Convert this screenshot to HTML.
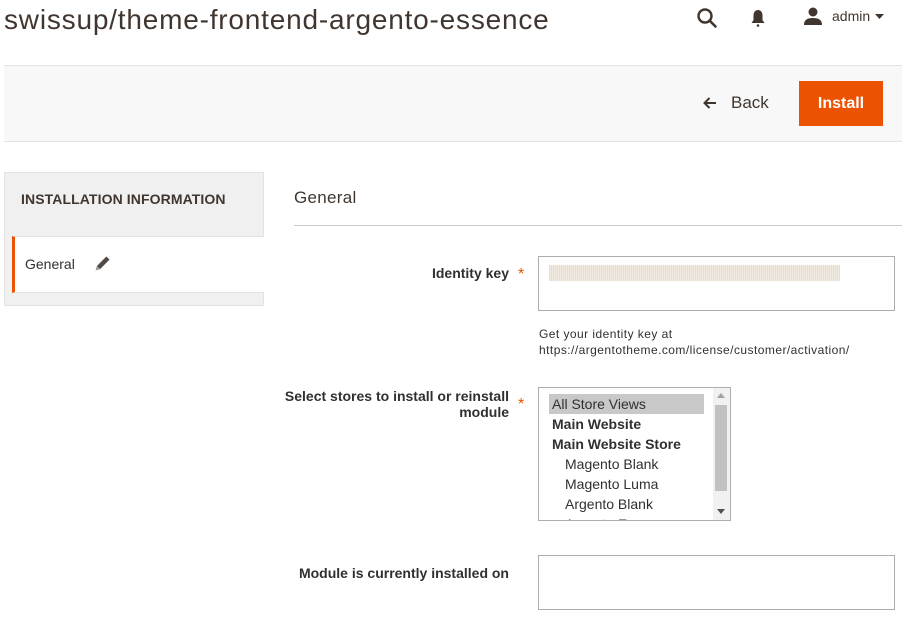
<!DOCTYPE html>
<html><head><meta charset="utf-8"><style>
*{box-sizing:border-box;margin:0;padding:0}
body{width:902px;height:620px;overflow:hidden;background:#fff;font-family:"Liberation Sans",sans-serif;color:#303030;position:relative}
.abs{position:absolute}
h1{position:absolute;left:4px;top:4px;font-size:28px;font-weight:400;color:#41362f;white-space:nowrap;letter-spacing:0.8px}
.bar{position:absolute;left:4px;top:65px;width:898px;height:77px;background:#f8f8f8;border-top:1px solid #e3e3e3;border-bottom:1px solid #e3e3e3}
.btn{position:absolute;left:799px;top:81px;width:84px;height:45px;background:#eb5202;color:#fff;font-weight:700;font-size:16px;text-align:center;line-height:45px}
.back{position:absolute;left:702px;top:93px;font-size:17px;color:#41362f}
.side{position:absolute;left:4px;top:172px;width:260px;height:134px;background:#f0f0f0;border:1px solid #e3e3e3}
.side .hd{position:absolute;left:16px;top:18px;font-weight:700;font-size:14px;color:#41362f;letter-spacing:0.1px}
.side .item{position:absolute;left:7px;top:63px;width:252px;height:57px;background:#fff;border-left:3px solid #eb5202;border-top:1px solid #e3e3e3;border-bottom:1px solid #e3e3e3}
.lbl{position:absolute;font-size:14px;font-weight:700;color:#303030;text-align:right;width:230px;left:279px;line-height:16px}
.star{position:absolute;color:#eb5202;font-size:16px;left:518px}
.ta{position:absolute;border:1px solid #adadad;background:#fff}
</style></head><body>
<h1>swissup/theme-frontend-argento-essence</h1>
<svg class="abs" style="left:696px;top:7px" width="22" height="22" viewBox="0 0 22 22"><circle cx="9" cy="9" r="6.5" fill="none" stroke="#41362f" stroke-width="2.4"/><path d="M13.5 13.5L19.5 19.5" stroke="#41362f" stroke-width="2.6" stroke-linecap="round"/></svg>
<svg class="abs" style="left:750px;top:9px" width="16" height="19" viewBox="0 0 16 19"><path d="M8 1C5 1 3.5 3.5 3.5 6.5V11L1.5 14H14.5L12.5 11V6.5C12.5 3.5 11 1 8 1Z" fill="#41362f"/><circle cx="8" cy="16.5" r="1.3" fill="#41362f"/></svg>
<svg class="abs" style="left:803px;top:6px" width="20" height="20" viewBox="0 0 20 20"><circle cx="10" cy="6" r="4.5" fill="#41362f"/><path d="M1 19C1 14 4 12 10 12C16 12 19 14 19 19Z" fill="#41362f"/></svg>
<div class="abs" style="left:832px;top:8px;font-size:14px;color:#41362f">admin</div>
<svg class="abs" style="left:875px;top:14px" width="9" height="6"><path d="M0 0H9L4.5 5Z" fill="#41362f"/></svg>
<div class="bar"></div>
<svg class="abs" style="left:702px;top:96px" width="16" height="14" viewBox="0 0 16 14"><path d="M14 7H3M7.5 2L2.5 7L7.5 12" fill="none" stroke="#41362f" stroke-width="2"/></svg>
<div class="back" style="left:731px">Back</div>
<div class="btn">Install</div>
<div class="side"><div class="hd">INSTALLATION INFORMATION</div>
<div class="item"><span class="abs" style="left:10px;top:19px;font-size:14px;color:#303030">General</span>
<svg class="abs" style="left:79px;top:17px" width="18" height="18" viewBox="0 0 16 16"><path d="M1.5 14.5L2.7 10.5L11 2.2L13.8 5L5.5 13.3Z" fill="#514943"/><path d="M1.5 14.5L2.7 10.5L5.5 13.3Z" fill="#999"/></svg></div></div>
<div class="abs" style="left:294px;top:188px;font-size:17px;color:#41362f;letter-spacing:0.3px">General</div>
<div class="abs" style="left:294px;top:225px;width:608px;height:1px;background:#cccccc"></div>
<div class="lbl" style="top:265px">Identity key</div><div class="star" style="top:266px">*</div>
<div class="ta" style="left:538px;top:256px;width:357px;height:55px"><div class="abs" style="left:10px;top:8px;width:291px;height:16px;background:repeating-linear-gradient(90deg,#cfd6e6 0 1px,#efe6da 1px 2px);opacity:.8"></div></div>
<div class="abs" style="left:539px;top:326px;font-size:12px;color:#303030;line-height:16px;letter-spacing:0.45px">Get your identity key at<br>https://argentotheme.com/license/customer/activation/</div>
<div class="lbl" style="top:388px">Select stores to install or reinstall module</div><div class="star" style="top:396px">*</div>
<div class="ta" style="left:538px;top:387px;width:193px;height:134px;overflow:hidden;font-size:14px;line-height:20px">
<div class="abs" style="left:10px;top:6px;width:155px;height:20px;background:#c8c8c8"></div>
<div class="abs" style="left:13px;top:6px;color:#303030">All Store Views</div>
<div class="abs" style="left:13px;top:26px;font-weight:700">Main Website</div>
<div class="abs" style="left:13px;top:46px;font-weight:700">Main Website Store</div>
<div class="abs" style="left:26px;top:66px">Magento Blank</div>
<div class="abs" style="left:26px;top:86px">Magento Luma</div>
<div class="abs" style="left:26px;top:106px">Argento Blank</div>
<div class="abs" style="left:26px;top:126px">Argento Essence</div>
<div class="abs" style="left:174px;top:0;width:17px;height:132px;background:#f1f1f1"></div>
<div class="abs" style="left:176px;top:17px;width:12px;height:86px;background:#c1c1c1"></div>
<svg class="abs" style="left:178px;top:5px" width="8" height="5"><path d="M0 5H8L4 0Z" fill="#a3a3a3"/></svg>
<svg class="abs" style="left:178px;top:121px" width="8" height="5"><path d="M0 0H8L4 5Z" fill="#505050"/></svg>
</div>
<div class="lbl" style="top:565px">Module is currently installed on</div>
<div class="ta" style="left:538px;top:555px;width:357px;height:55px"></div>
</body></html>
